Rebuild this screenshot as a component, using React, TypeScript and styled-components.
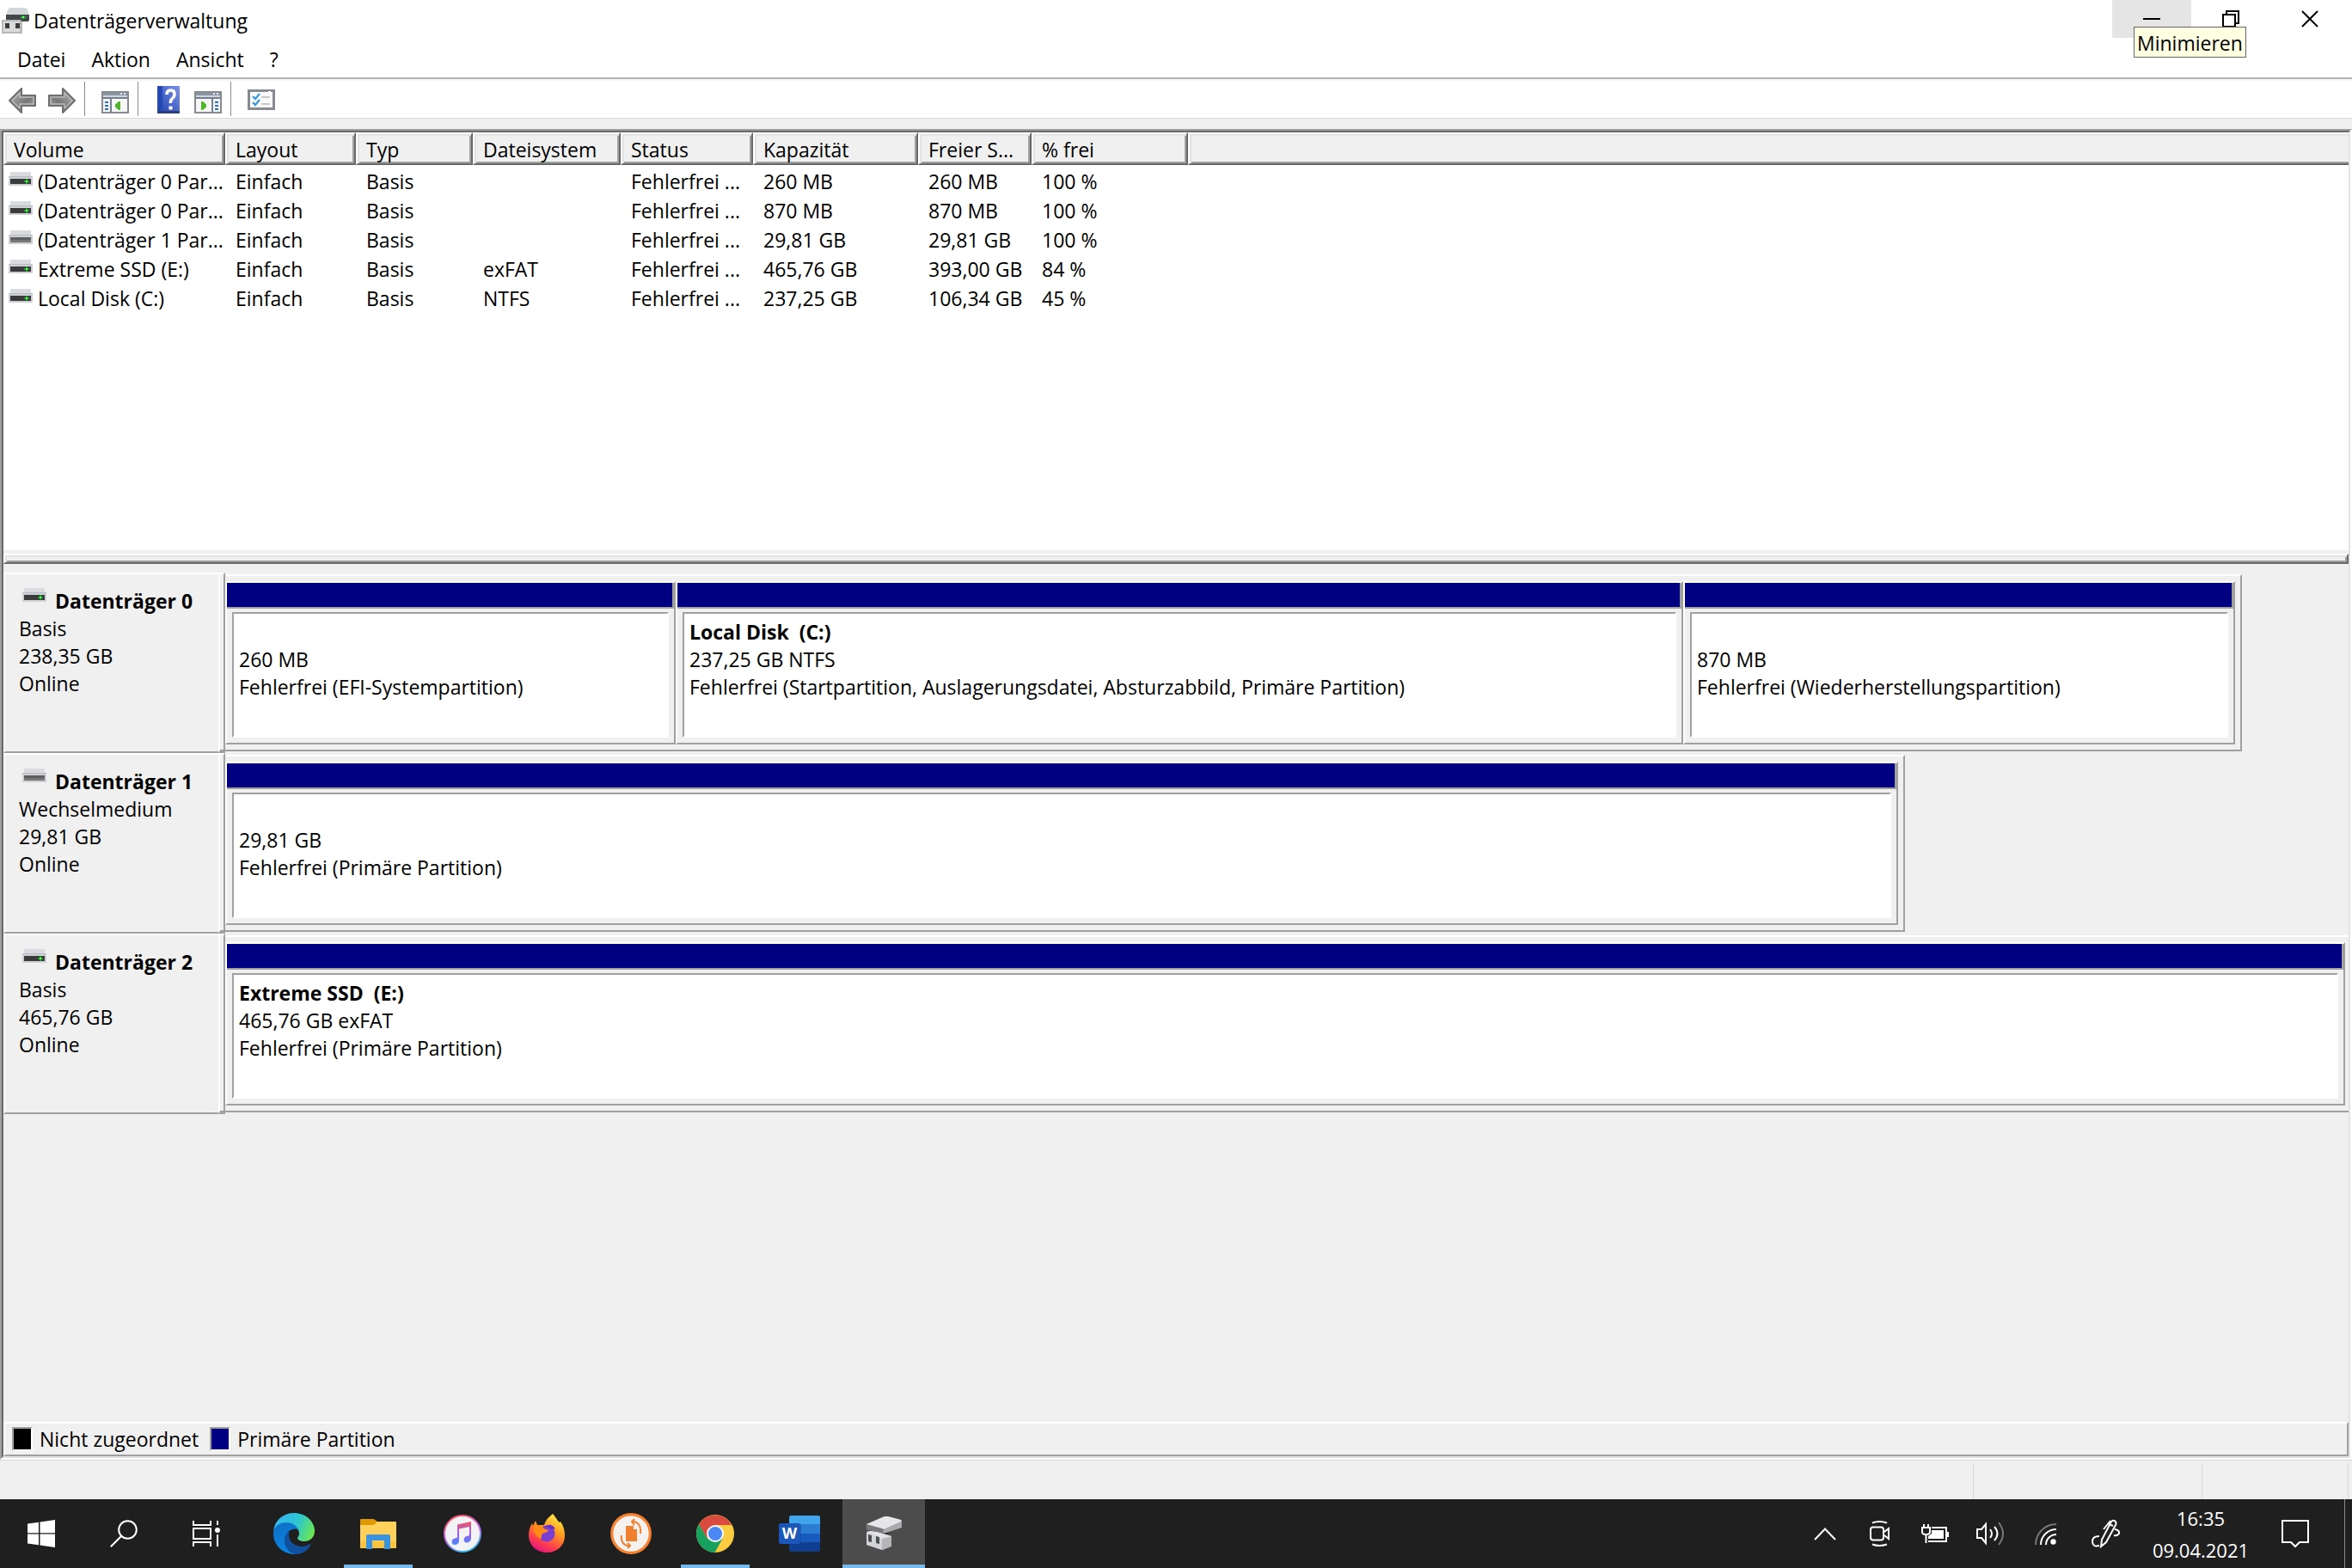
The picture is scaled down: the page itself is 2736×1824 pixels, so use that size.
import React from 'react';
import styled, { createGlobalStyle, css } from 'styled-components';

const GlobalStyle = createGlobalStyle`
  *, *::before, *::after { box-sizing: border-box; }
  html, body { margin: 0; padding: 0; }
  body {
    font-family: 'Open Sans', 'Noto Sans', sans-serif;
    font-size: 23px;
    line-height: 32px;
    color: #000;
    background: #f0f0f0;
  }
  button { font: inherit; color: inherit; border: 0; padding: 0; margin: 0; background: transparent; }
  svg { display: block; flex: none; }
`;

const face = '#f0f0f0';
const shade = '#a0a0a0';
const dark = '#696969';
const light = '#e3e3e3';

const raised = css`
  background: ${face};
  border: 2px solid;
  border-color: #fff ${dark} ${dark} #fff;
  box-shadow: inset 2px 2px 0 ${light}, inset -2px -2px 0 ${shade};
`;

/* ---------- window frame ---------- */

const Desktop = styled.div`
  display: flex;
  flex-direction: column;
  min-height: 100vh;
`;

const Top = styled.header`
  background: #fff;
`;

const TitleBar = styled.div`
  display: flex;
  align-items: center;
  height: 48px;
  padding: 0 3px 0 2px;
`;

const Title = styled.h1`
  flex: 1;
  margin: 0 0 0 5px;
  font-size: 23px;
  font-weight: 400;
`;

const WindowButtons = styled.div`
  display: flex;
  align-self: flex-start;
`;

const WindowButtonSlot = styled.div`
  position: relative;
`;

const WindowButton = styled.button<{ $hover?: boolean }>`
  display: flex;
  align-items: center;
  justify-content: center;
  width: 92px;
  height: 44px;
  background: ${(p) => (p.$hover ? '#e5e5e5' : 'transparent')};
`;

const Tooltip = styled.span`
  position: absolute;
  z-index: 2;
  top: 31px;
  left: 25px;
  padding: 2px 3px 0;
  border: 1px solid #646464;
  background: #ffffe1;
  white-space: nowrap;
`;

const MenuBar = styled.nav`
  display: flex;
  height: 42px;
  padding-left: 5px;
`;

const MenuItem = styled.button`
  padding: 0 15px;
`;

const ToolBar = styled.div`
  display: flex;
  align-items: center;
  height: 48px;
  padding-left: 3px;
  border-top: 2px solid #b4b4b4;
  border-bottom: 1px solid #dadada;
  box-shadow: inset 0 2px 0 #f2f8fc;
`;

const ToolButton = styled.button`
  display: flex;
  align-items: flex-end;
  justify-content: center;
  width: 46px;
  height: 40px;
  padding-bottom: 3px;
`;

const ToolSeparator = styled.span`
  width: 1px;
  height: 40px;
  margin: 0 12px 0 3px;
  background: #8c8c8c;
`;

/* ---------- main pane ---------- */

const PaneOuter = styled.main`
  display: flex;
  flex: 1;
  margin-top: 12px;
  border: 2px solid;
  border-color: ${shade} #fff #fff ${shade};
`;

const PaneInner = styled.div`
  display: flex;
  flex: 1;
  flex-direction: column;
  min-width: 0;
  border: 2px solid;
  border-color: ${dark} ${light} ${light} ${dark};
`;

const VolumeList = styled.section`
  flex: 0 0 486px;
  background: #fff;
  overflow: hidden;
`;

const VolumeTable = styled.table`
  width: 100%;
  table-layout: fixed;
  border-spacing: 0;
  white-space: nowrap;
`;

const Col = styled.col<{ $width?: number }>`
  width: ${(p) => (p.$width ? `${p.$width}px` : 'auto')};
`;

const HeadCell = styled.th`
  ${raised}
  height: 38px;
  padding: 3px 10px 0;
  font-weight: 400;
  line-height: 31px;
  text-align: left;
  &:last-child { border-right: 0; box-shadow: inset 2px 2px 0 ${light}, inset 0 -2px 0 ${shade}; }
`;

const Cell = styled.td`
  height: 34px;
  padding: 4px 0 0 12px;
  line-height: 30px;
`;

const NameCell = styled(Cell)`
  padding-left: 6px;
`;

const VolumeName = styled.span`
  display: flex;
  align-items: flex-start;
  gap: 6px;
  svg { margin-top: 4px; }
`;

const Splitter = styled.div`
  ${raised}
  height: 12px;
  margin-top: 4px;
`;

const DiskArea = styled.section`
  flex: 1;
  padding-top: 10px;
  overflow: hidden;
`;

const DiskRow = styled.article<{ $used: number; $rest: number }>`
  display: grid;
  grid-template-columns: 250px 8px minmax(0, ${(p) => p.$used}fr) minmax(0, ${(p) => p.$rest}fr);
  height: 210px;
`;

const DiskLabel = styled.div`
  padding: 15px 0 0 16px;
  border: 2px solid;
  border-color: #fff transparent ${shade} #fff;
  border-right: 0;
`;

const DiskTitle = styled.h2`
  display: flex;
  align-items: flex-start;
  gap: 10px;
  margin: 0;
  padding-left: 4px;
  font-size: 23px;
  font-weight: 700;
  svg { margin-top: 1px; }
`;

const Gutter = styled.div`
  border: solid;
  border-width: 2px 2px 4px;
  border-color: #fff ${shade} ${shade} #fff;
`;

const Graph = styled.div<{ $open?: boolean; $columns: string }>`
  display: grid;
  grid-template-columns: ${(p) => p.$columns};
  margin: 2px 0;
  padding: 6px ${(p) => (p.$open ? 4 : 6)}px 6px 0;
  border: 2px solid;
  border-color: #fff ${shade} ${shade};
  border-left: 0;
  ${(p) => p.$open && 'border-right: 0;'}
`;

const PartitionBox = styled.div`
  display: flex;
  flex-direction: column;
  min-width: 0;
  border: 2px solid;
  border-color: #fff ${shade} ${shade} #fff;
`;

const PartitionBar = styled.div`
  height: 30px;
  background: #000080;
  border: 2px solid ${shade};
  border-width: 0 2px 2px 0;
`;

const PartitionBody = styled.div`
  flex: 1;
  margin: 4px 6px 6px;
  padding: 5px 0 0 6px;
  border: 2px solid;
  border-color: ${shade} #fff #fff ${shade};
  background: #fff;
  white-space: pre;
`;

const Line = styled.div<{ $bold?: boolean }>`
  height: 32px;
  font-weight: ${(p) => (p.$bold ? 700 : 400)};
`;

const Legend = styled.footer`
  display: flex;
  align-items: center;
  height: 40px;
  padding: 0 8px;
  border: 2px solid;
  border-color: #fff ${shade} ${shade} #fff;
`;

const LegendItem = styled.span`
  display: flex;
  align-items: center;
  gap: 8px;
  margin-right: 13px;
`;

const Swatch = styled.i<{ $color: string }>`
  width: 24px;
  height: 28px;
  border: 2px solid;
  border-color: ${shade} #fff #fff ${shade};
  background: ${(p) => p.$color};
`;

const StatusBar = styled.div`
  display: flex;
  justify-content: flex-end;
  height: 46px;
  padding: 3px 4px 1px 0;
  border-top: 1px solid #d7d7d7;
`;

const StatusPart = styled.div<{ $width: number; $first?: boolean }>`
  width: ${(p) => p.$width}px;
  border-right: 1px solid #d7d7d7;
  ${(p) => p.$first && 'border-left: 1px solid #d7d7d7;'}
`;

/* ---------- taskbar ---------- */

const TaskBar = styled.footer`
  display: flex;
  height: 80px;
  background: #1f1f1f;
  color: #fff;
`;

const SystemButton = styled.button<{ $width?: number }>`
  display: flex;
  align-items: center;
  justify-content: center;
  width: ${(p) => p.$width ?? 96}px;
`;

const Apps = styled.div`
  display: flex;
  flex: 1;
  gap: 2px;
  margin-left: 6px;
`;

const AppButton = styled.button<{ $state?: 'running' | 'active' }>`
  display: flex;
  align-items: center;
  justify-content: center;
  width: 96px;
  background-color: ${(p) => (p.$state === 'active' ? '#4c4c4c' : 'transparent')};
  background-image: ${(p) => (p.$state ? 'linear-gradient(#76b9ed, #76b9ed)' : 'none')};
  background-repeat: no-repeat;
  background-position: bottom center;
  background-size: ${(p) => (p.$state === 'active' ? '100%' : '80px')} 4px;
`;

const Clock = styled.button`
  display: flex;
  flex-direction: column;
  align-items: center;
  gap: 5px;
  width: 142px;
  padding-top: 6px;
  font-size: 22px;
  line-height: 32px;
`;

const ShowDesktop = styled.button`
  width: 9px;
  margin-left: 18px;
  border-left: 1px solid #8a8a8a;
`;

/* ---------- icons ---------- */

const DriveIcon = ({ removable }: { removable?: boolean }) => (
  <svg width="28" height="16" viewBox="0 0 28 16">
    <path d="M2 0h24v6H2z" fill="#d9dbdf" />
    <path d="M0 5h28v11H0z" fill="#cdd0d4" />
    <path d="M0 5h28v1H0z" fill="#b9bcc0" />
    <path d="M2 8h24v6H2z" fill={removable ? '#5e5e5e' : '#3b3b3b'} />
    {removable ? (
      <path d="M2 11h24v3H2z" fill="#777" />
    ) : (
      <>
        <path d="M18 11h6M21 8v6" stroke="#1f9a2b" strokeWidth="2" />
        <path d="M20 10h2v2h-2z" fill="#66ff66" />
      </>
    )}
  </svg>
);

const AppIcon = () => (
  <svg width="32" height="30" viewBox="0 0 32 30">
    <path d="M8 1q1-1 2-1h17q2 0 3 2l2 6H5z" fill="#d4d7da" />
    <path d="M5 8h27v6q0 2-2 2H7q-2 0-2-2z" fill="#44474a" />
    <path d="M22 11h6M25 9v4" stroke="#27a532" strokeWidth="2" />
    <path d="M24 10h2v2h-2z" fill="#6f6" />
    <path d="M0 14h22l2 3v13H0z" fill="#b9b9bb" />
    <path d="M2 16h19v12H2z" fill="#dadadb" />
    <path d="M4 18h5v6H4zM16 18h5v6h-5z" fill="#3c3c3e" />
  </svg>
);

const ArrowIcon = ({ forward }: { forward?: boolean }) => (
  <svg width="32" height="30" viewBox="0 0 32 30">
    <defs>
      <linearGradient id={forward ? 'arrF' : 'arrB'} x1="0" y1="0" x2="1" y2="1">
        <stop offset="0" stopColor="#bdbdbd" />
        <stop offset=".6" stopColor="#777" />
        <stop offset="1" stopColor="#b5b5b5" />
      </linearGradient>
    </defs>
    <g transform={forward ? 'translate(32 0) scale(-1 1)' : undefined} strokeLinejoin="round">
      <path d="M1 15 15 1v8h16v12H15v8z" fill={`url(#${forward ? 'arrF' : 'arrB'})`} stroke="#6e6e6e" strokeWidth="2" />
      <path d="M4 15l9-9v5h16v8H13v5z" fill="none" stroke="#b9b9b9" strokeWidth="1.5" />
    </g>
  </svg>
);

const PaneIcon = ({ right }: { right?: boolean }) => (
  <svg width="32" height="26" viewBox="0 0 32 26">
    <path d="M1 1h30v24H1z" fill="#f7f7f7" stroke="#868b91" strokeWidth="2" />
    <path d="M2 2h28v3H2z" fill="#8a95a3" />
    <path d="M22 2h2v2h-2zM26 2h2v2h-2z" fill="#e8ecf2" />
    <path d="M2 5h28v2H2z" fill="#cfd6df" />
    <path d="M2 7h28v2H2z" fill="#74808f" />
    {right ? (
      <>
        <path d="M20 9h2v16h-2z" fill="#74808f" />
        <path d="M24 12h4v2h-4zM24 16h4v2h-4zM24 20h4v2h-4z" fill="#2e6fb5" />
        <path d="M8 12v10h2l4-3.500v-3L10 12z" fill="#4fb52a" />
      </>
    ) : (
      <>
        <path d="M10 9h2v16h-2z" fill="#74808f" />
        <path d="M4 12h4v2H4zM4 16h4v2H4zM4 20h4v2H4z" fill="#2e6fb5" />
        <path d="M22 12v10h-2l-4-3.500v-3l4-3.500z" fill="#4fb52a" />
      </>
    )}
  </svg>
);

const HelpIcon = () => (
  <svg width="26" height="32" viewBox="0 0 26 32">
    <defs>
      <linearGradient id="help" x1="0" y1="1" x2="1" y2="0">
        <stop offset="0" stopColor="#1c3fa8" />
        <stop offset="1" stopColor="#7c92ea" />
      </linearGradient>
    </defs>
    <path d="M0 0h26v32H0z" fill="url(#help)" />
    <path d="M0 0h6v32H0z" fill="#2549b4" />
    <path d="M0 29h26v3H0z" fill="#2d3f78" />
    <path d="M11 10q0-5 4.500-5T20 9.500q0 3-2.500 5T15.500 20" fill="none" stroke="#fff" strokeWidth="3.500" />
    <path d="M13.500 23.500h4v4h-4z" fill="#fff" />
  </svg>
);

const ChecklistIcon = () => (
  <svg width="32" height="28" viewBox="0 0 32 28">
    <path d="M1.500 1.500h29v21h-29z" fill="#fafafa" stroke="#868b91" strokeWidth="3" />
    <path d="M24 2h3v1h-3z" fill="#fff" />
    <path d="M6 8l3 3 5-6M6 15l3 3 5-6" fill="none" stroke="#3a97dc" strokeWidth="2.200" />
    <path d="M16 9h10M16 17h10" stroke="#c8c8c8" strokeWidth="2" />
  </svg>
);

const MinimizeGlyph = () => (
  <svg width="20" height="20" viewBox="0 0 20 20"><path d="M0 10h20" stroke="#000" strokeWidth="2" /></svg>
);
const RestoreGlyph = () => (
  <svg width="20" height="20" viewBox="0 0 20 20">
    <path d="M1 5h14v14H1zM5 5V1h14v14h-4" fill="none" stroke="#000" strokeWidth="2" />
  </svg>
);
const CloseGlyph = () => (
  <svg width="20" height="20" viewBox="0 0 20 20"><path d="M1 1l18 18M19 1L1 19" stroke="#000" strokeWidth="2" /></svg>
);

const StartIcon = () => (
  <svg width="32" height="32" viewBox="0 0 32 32">
    <path d="M0 4.500 13 2.700v12.600H0zM14.500 2.400 32 0v15.300H14.500zM0 16.500h13v12.700L0 27.500zM14.500 16.500H32V32l-17.500-2.600z" fill="#fff" />
  </svg>
);
const SearchIcon = () => (
  <svg width="32" height="32" viewBox="0 0 32 32" fill="none" stroke="#fff" strokeWidth="2">
    <circle cx="20.500" cy="11.500" r="10.300" /><path d="M13 19 .8 31.200" />
  </svg>
);
const TaskViewIcon = () => (
  <svg width="32" height="30" viewBox="0 0 32 30" fill="none" stroke="#fff" strokeWidth="2">
    <path d="M1 0v5h20V0M1 9h20v12H1zM1 30v-5h20v5M29 0v5M29 16v14" />
    <circle cx="29" cy="11" r="3" fill="#fff" stroke="none" />
  </svg>
);
const EdgeIcon = () => (
  <svg width="48" height="48" viewBox="0 0 48 48">
    <defs>
      <linearGradient id="edgeTop" x1="0" y1=".3" x2="1" y2=".6">
        <stop offset="0" stopColor="#38b6f5" /><stop offset=".55" stopColor="#2cc6cf" /><stop offset="1" stopColor="#6be653" />
      </linearGradient>
      <linearGradient id="edgeBlue" x1="0" y1="0" x2=".4" y2="1">
        <stop offset="0" stopColor="#0f6fc4" /><stop offset="1" stopColor="#0a84e0" />
      </linearGradient>
    </defs>
    <path d="M0 22C1 9 11 0 24 0c14 0 24 10 24 21 0 8-6 12-12 12-5 0-8-2-8-4 0-1 2-2 2-5 0-6-6-12-15-12C7 12 1 17 0 22z" fill="url(#edgeTop)" />
    <path d="M0 24C0 16 7 11 15 11c8 0 13 5 15 10-2-2-4-3-7-2-6 1-9 7-9 13 0 8 6 15 14 16C12 49 0 38 0 24z" fill="url(#edgeBlue)" />
    <path d="M19 20c-4 3-7 8-6 14 1 8 7 14 15 14 7-1 12-5 15-10 1-2-1-2-2-1-9 5-22 0-23-10 0-3 0-5 1-7z" fill="#10509f" />
  </svg>
);
const FolderIcon = () => (
  <svg width="42" height="35" viewBox="0 0 42 35">
    <path d="M0 1q0-1 1-1h14q2 0 3 1.500L20 3v4H0z" fill="#e09a00" />
    <path d="M0 7h14q3 0 4-2l1-2h22q1 0 1 1v29q0 1-1 1H1q-1 0-1-1z" fill="#ffd05a" />
    <path d="M0 26h42v7q0 1-1 1H1q-1 0-1-1z" fill="#fbc440" />
    <path d="M7 35V20q0-2 2-2h24q2 0 2 2v15h-7V25H14v10z" fill="#3a93dc" />
  </svg>
);
const MusicIcon = () => (
  <svg width="44" height="44" viewBox="0 0 44 44">
    <defs>
      <linearGradient id="ring" x1=".3" y1="0" x2=".7" y2="1">
        <stop offset="0" stopColor="#fb5a66" /><stop offset=".5" stopColor="#c36bea" /><stop offset="1" stopColor="#27c1f5" />
      </linearGradient>
      <linearGradient id="note" x1="0" y1="0" x2="0" y2="1">
        <stop offset="0" stopColor="#f2556c" /><stop offset=".6" stopColor="#8e62e8" /><stop offset="1" stopColor="#4a8dff" />
      </linearGradient>
    </defs>
    <circle cx="22" cy="22" r="21" fill="#f3f2f5" stroke="url(#ring)" strokeWidth="2" />
    <path d="M16 11.500 32 8v19c0 3-2 5.500-5 5.500-5 0-4-7 0-7.500 2-.300 3-.600 3-2V14l-12 2.500V30c0 3-2 5-5 5-5 0-4-7 0-7.500 2-.300 3-.600 3-2z" fill="url(#note)" />
  </svg>
);
const FirefoxIcon = () => (
  <svg width="42" height="46" viewBox="0 0 42 46">
    <defs>
      <linearGradient id="fox" x1=".8" y1="0" x2=".3" y2="1">
        <stop offset="0" stopColor="#fff04a" /><stop offset=".4" stopColor="#ff9a1f" /><stop offset=".75" stopColor="#ff3f4c" /><stop offset="1" stopColor="#e3127e" />
      </linearGradient>
    </defs>
    <path d="M28 0c4 4 5 8 8 10l1-1c3 4 5 10 5 16 0 12-9 20-21 20S0 36 0 25C0 19 2 14 4 11l1 3 3-6 2 5h8c2-6 5-9 10-13z" fill="url(#fox)" />
    <circle cx="21" cy="23" r="9.500" fill="#7a3fd0" />
    <path d="M5 14c4-2 9-1 12 2 1 2 4 2 6 3-1 3-5 3-7 4-2 2 0 4-2 6-5-2-9-8-9-15z" fill="#ff8a16" />
    <path d="M19 15c5-5 11-1 12 3-3-1-4 0-5 0-2-1-4-3-7-3z" fill="#6a2fc0" />
  </svg>
);
const ConverterIcon = () => (
  <svg width="48" height="48" viewBox="0 0 48 48">
    <circle cx="24" cy="24" r="22.300" fill="#f4f1ee" stroke="#f58131" strokeWidth="3.200" />
    <path d="M18 15h9l4 4v14H18z" fill="#f0802f" />
    <path d="M27 15v4h4z" fill="#fff" />
    <path d="M25 10c7-1 11 5 10 14M23 38c-7 1-11-4-10-12M28 7l-3 3 3 4M20 35l3 3-3 3" fill="none" stroke="#f0802f" strokeWidth="2" />
  </svg>
);
const ChromeIcon = () => (
  <svg width="44" height="44" viewBox="0 0 44 44">
    <circle cx="22" cy="22" r="22" fill="#fccb3f" />
    <path d="M3 11A22 22 0 0 1 41.200 12H22l-9.500 15.500z" fill="#db4a3e" />
    <path d="M3 11a22 22 0 0 0 18.500 33L31 27 22 32l-9.500-4.500z" fill="#17a05e" />
    <circle cx="22" cy="22" r="10" fill="#f3f6fb" />
    <circle cx="22" cy="22" r="8" fill="#4c88f3" />
  </svg>
);
const WordLetter = styled.span`
  position: absolute;
  top: 9px;
  left: 0;
  width: 25px;
  height: 24px;
  border-radius: 2px;
  background: #1a57b8;
  color: #fff;
  font-size: 18px;
  font-weight: 700;
  line-height: 23px;
  text-align: center;
`;
const WordMark = styled.span`
  position: relative;
  display: block;
`;
const WordIcon = () => (
  <WordMark>
    <svg width="48" height="42" viewBox="0 0 48 42">
      <path d="M12 2q0-2 2-2h32q2 0 2 2v8H12z" fill="#41a5ee" />
      <path d="M12 10h36v11H12z" fill="#2b7cd3" />
      <path d="M12 21h36v10H12z" fill="#185abd" />
      <path d="M12 31h36v9q0 2-2 2H14q-2 0-2-2z" fill="#103f91" />
      <path d="M12 10h14v25H12z" fill="#0d3a80" opacity=".35" />
    </svg>
    <WordLetter>W</WordLetter>
  </WordMark>
);
const DiskManagerIcon = () => (
  <svg width="42" height="40" viewBox="0 0 42 40">
    <path d="M8 16l20 2-6 6-10-3z" fill="#2c2e2d" />
    <path d="M14 16l3 1-1 1z" fill="#2fbf3a" />
    <path d="M1 19q0-2 3-2l9 1 17 5v12l-10 4L1 33z" fill="#b4b5b8" />
    <path d="M1 19q9 2 18 6v14L1 33z" fill="#d2d3d6" />
    <path d="M1 19l4-2 9 1 16 5-11 3q-9-5-18-7z" fill="#e3e3e5" />
    <path d="M3 21l4 1v8l-4-1zM12 23l4 1v8l-4-1z" fill="#4c4d50" />
    <path d="M1 9 22 0q2-1 4 0l15 4q1 1 1 3v6L24 19l-4 .500L1 15z" fill="#a9aaae" />
    <path d="M1 9l20 5-1 5.500L1 15q-1-3 0-6z" fill="#77787b" />
    <path d="M1 9 22 0q2-1 4 0l15 4q1 1 0 2L23 14q-2 1-4 0z" fill="#e6e6e8" />
  </svg>
);

const ChevronIcon = () => (
  <svg width="26" height="15" viewBox="0 0 26 15"><path d="M1 14 13 1.500 25 14" fill="none" stroke="#fff" strokeWidth="2" /></svg>
);
const MeetIcon = () => (
  <svg width="24" height="32" viewBox="0 0 24 32" fill="none" stroke="#fff" strokeWidth="2">
    <path d="M3 3.500q8-3 17 0M3 28.500q8 3 17 0M17 14l5-4v12l-5-4" />
    <rect x="1" y="8.500" width="15" height="15" rx="3" />
  </svg>
);
const BatteryIcon = () => (
  <svg width="32" height="24" viewBox="0 0 32 24">
    <path d="M12 5h17v16H8" fill="none" stroke="#fff" strokeWidth="2" />
    <path d="M12 8h14v10H8v-3l4-3zM30 10h2v6h-2z" fill="#fff" />
    <path d="M3 1v4M8 1v4M1 5h9v5q0 3-4.500 3T1 10zM5.500 13v10" fill="none" stroke="#fff" strokeWidth="2" />
  </svg>
);
const VolumeIcon = () => (
  <svg width="32" height="28" viewBox="0 0 32 28" fill="none" stroke="#fff" strokeWidth="2">
    <path d="M1 9h5l5-6v22l-5-6H1z" />
    <path d="M16 9q4 5 0 10M21 6q7 8 0 16" />
    <path d="M26 1q10 13 0 26" stroke="#777" />
  </svg>
);
const WifiIcon = () => (
  <svg width="25" height="25" viewBox="0 0 25 25" fill="none" stroke="#fff" strokeWidth="2">
    <path d="M1 25A24 24 0 0 1 25 1" stroke="#777" />
    <path d="M7 25A18 18 0 0 1 25 7M13 25a12 12 0 0 1 12-12" />
    <circle cx="21.500" cy="21.500" r="3.200" fill="#fff" stroke="none" />
  </svg>
);
const PenIcon = () => (
  <svg width="34" height="34" viewBox="0 0 34 34" fill="none" stroke="#fff" strokeWidth="2">
    <path d="M11 32l1-8L23 3q2-2.500 5 0 1 2 0 4L17 27zM20 6l5 2M22 2l-8 10M9 20q-8 0-8 6 0 7 8 5M27 12q6 1 5 5-2 3-6 2" />
  </svg>
);
const NoticeIcon = () => (
  <svg width="32" height="34" viewBox="0 0 32 34"><path d="M1 2h30v25H21l-5 5-5-5H1z" fill="none" stroke="#fff" strokeWidth="2" /></svg>
);

/* ---------- data ---------- */

const columns: { label: string; width?: number }[] = [
  { label: 'Volume', width: 258 },
  { label: 'Layout', width: 152 },
  { label: 'Typ', width: 136 },
  { label: 'Dateisystem', width: 172 },
  { label: 'Status', width: 154 },
  { label: 'Kapazität', width: 192 },
  { label: 'Freier S...', width: 132 },
  { label: '% frei', width: 182 },
];

const volumes = [
  { name: '(Datenträger 0 Par...', fs: '', size: '260 MB', free: '260 MB', pct: '100 %' },
  { name: '(Datenträger 0 Par...', fs: '', size: '870 MB', free: '870 MB', pct: '100 %' },
  { name: '(Datenträger 1 Par...', fs: '', size: '29,81 GB', free: '29,81 GB', pct: '100 %', removable: true },
  { name: 'Extreme SSD (E:)', fs: 'exFAT', size: '465,76 GB', free: '393,00 GB', pct: '84 %' },
  { name: 'Local Disk (C:)', fs: 'NTFS', size: '237,25 GB', free: '106,34 GB', pct: '45 %' },
];

const disks = [
  {
    name: 'Datenträger 0', kind: 'Basis', size: '238,35 GB', used: 2346, rest: 124,
    parts: [
      { share: 524, title: '', size: '260 MB', state: 'Fehlerfrei (EFI-Systempartition)' },
      { share: 1172, title: 'Local Disk  (C:)', size: '237,25 GB NTFS', state: 'Fehlerfrei (Startpartition, Auslagerungsdatei, Absturzabbild, Primäre Partition)' },
      { share: 642, title: '', size: '870 MB', state: 'Fehlerfrei (Wiederherstellungspartition)' },
    ],
  },
  {
    name: 'Datenträger 1', kind: 'Wechselmedium', size: '29,81 GB', used: 1954, rest: 516, removable: true,
    parts: [{ share: 1, title: '', size: '29,81 GB', state: 'Fehlerfrei (Primäre Partition)' }],
  },
  {
    name: 'Datenträger 2', kind: 'Basis', size: '465,76 GB', used: 2470, rest: 0,
    parts: [{ share: 1, title: 'Extreme SSD  (E:)', size: '465,76 GB exFAT', state: 'Fehlerfrei (Primäre Partition)' }],
  },
];

const apps: { name: string; icon: React.ReactNode; state?: 'running' | 'active' }[] = [
  { name: 'Microsoft Edge', icon: <EdgeIcon /> },
  { name: 'Explorer', icon: <FolderIcon />, state: 'running' },
  { name: 'iTunes', icon: <MusicIcon /> },
  { name: 'Firefox', icon: <FirefoxIcon /> },
  { name: 'Konverter', icon: <ConverterIcon /> },
  { name: 'Chrome', icon: <ChromeIcon />, state: 'running' },
  { name: 'Word', icon: <WordIcon /> },
  { name: 'Datenträgerverwaltung', icon: <DiskManagerIcon />, state: 'active' },
];

export default function App() {
  return (
    <Desktop>
      <GlobalStyle />
      <Top>
        <TitleBar>
          <AppIcon />
          <Title>Datenträgerverwaltung</Title>
          <WindowButtons>
            <WindowButtonSlot>
              <WindowButton $hover aria-label="Minimieren"><MinimizeGlyph /></WindowButton>
              <Tooltip role="tooltip">Minimieren</Tooltip>
            </WindowButtonSlot>
            <WindowButton aria-label="Verkleinern"><RestoreGlyph /></WindowButton>
            <WindowButton aria-label="Schließen"><CloseGlyph /></WindowButton>
          </WindowButtons>
        </TitleBar>
        <MenuBar>
          {['Datei', 'Aktion', 'Ansicht', '?'].map((m) => <MenuItem key={m}>{m}</MenuItem>)}
        </MenuBar>
        <ToolBar role="toolbar">
          <ToolButton aria-label="Zurück"><ArrowIcon /></ToolButton>
          <ToolButton aria-label="Vorwärts"><ArrowIcon forward /></ToolButton>
          <ToolSeparator />
          <ToolButton aria-label="Konsolenstruktur"><PaneIcon /></ToolButton>
          <ToolSeparator />
          <ToolButton aria-label="Hilfe"><HelpIcon /></ToolButton>
          <ToolButton aria-label="Aktionsbereich"><PaneIcon right /></ToolButton>
          <ToolSeparator />
          <ToolButton aria-label="Eigenschaften"><ChecklistIcon /></ToolButton>
        </ToolBar>
      </Top>

      <PaneOuter>
        <PaneInner>
          <VolumeList>
            <VolumeTable>
              <colgroup>
                {columns.map((c) => <Col key={c.label} $width={c.width} />)}
                <Col />
              </colgroup>
              <thead>
                <tr>
                  {columns.map((c) => <HeadCell key={c.label} scope="col">{c.label}</HeadCell>)}
                  <HeadCell aria-hidden="true" />
                </tr>
              </thead>
              <tbody>
                {volumes.map((v, i) => (
                  <tr key={i}>
                    <NameCell><VolumeName><DriveIcon removable={v.removable} />{v.name}</VolumeName></NameCell>
                    <Cell>Einfach</Cell>
                    <Cell>Basis</Cell>
                    <Cell>{v.fs}</Cell>
                    <Cell>Fehlerfrei ...</Cell>
                    <Cell>{v.size}</Cell>
                    <Cell>{v.free}</Cell>
                    <Cell>{v.pct}</Cell>
                    <Cell />
                  </tr>
                ))}
              </tbody>
            </VolumeTable>
          </VolumeList>
          <Splitter role="separator" />
          <DiskArea>
            {disks.map((d) => (
              <DiskRow key={d.name} $used={d.used} $rest={d.rest}>
                <DiskLabel>
                  <DiskTitle><DriveIcon removable={d.removable} />{d.name}</DiskTitle>
                  <Line>{d.kind}</Line>
                  <Line>{d.size}</Line>
                  <Line>Online</Line>
                </DiskLabel>
                <Gutter />
                <Graph $open={d.rest === 0} $columns={d.parts.map((p) => `minmax(0, ${p.share}fr)`).join(' ')}>
                  {d.parts.map((p) => (
                    <PartitionBox key={p.state}>
                      <PartitionBar />
                      <PartitionBody>
                        <Line $bold>{p.title}</Line>
                        <Line>{p.size}</Line>
                        <Line>{p.state}</Line>
                      </PartitionBody>
                    </PartitionBox>
                  ))}
                </Graph>
              </DiskRow>
            ))}
          </DiskArea>
          <Legend>
            <LegendItem><Swatch $color="#000" />Nicht zugeordnet</LegendItem>
            <LegendItem><Swatch $color="#000080" />Primäre Partition</LegendItem>
          </Legend>
        </PaneInner>
      </PaneOuter>
      <StatusBar>
        <StatusPart $width={267} $first />
        <StatusPart $width={170} />
      </StatusBar>

      <TaskBar>
        <SystemButton aria-label="Start"><StartIcon /></SystemButton>
        <SystemButton aria-label="Suche"><SearchIcon /></SystemButton>
        <SystemButton aria-label="Taskansicht"><TaskViewIcon /></SystemButton>
        <Apps>
          {apps.map((a) => (
            <AppButton key={a.name} aria-label={a.name} $state={a.state}>{a.icon}</AppButton>
          ))}
        </Apps>
        <SystemButton $width={64} aria-label="Ausgeblendete Symbole"><ChevronIcon /></SystemButton>
        <SystemButton $width={64} aria-label="Besprechung"><MeetIcon /></SystemButton>
        <SystemButton $width={64} aria-label="Akku"><BatteryIcon /></SystemButton>
        <SystemButton $width={64} aria-label="Lautstärke"><VolumeIcon /></SystemButton>
        <SystemButton $width={64} aria-label="WLAN"><WifiIcon /></SystemButton>
        <SystemButton $width={78} aria-label="Stift"><PenIcon /></SystemButton>
        <Clock><span>16:35</span><span>09.04.2021</span></Clock>
        <SystemButton $width={78} aria-label="Info-Center"><NoticeIcon /></SystemButton>
        <ShowDesktop aria-label="Desktop anzeigen" />
      </TaskBar>
    </Desktop>
  );
}
